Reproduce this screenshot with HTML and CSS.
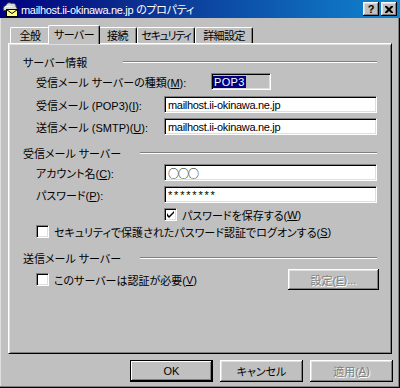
FILE: index.html
```html
<!DOCTYPE html>
<html lang="ja">
<head>
<meta charset="utf-8">
<title>mailhost.ii-okinawa.ne.jp のプロパティ</title>
<link rel="stylesheet" href="styles.css">
</head>
<body>
<div class="window">
  <div class="titlebar">
    <svg class="app-icon" width="16" height="16" viewBox="0 0 16 16">
      <path d="M1.5 9.5 C0.5 7 2 4.5 4 4.5 C4.5 2 7.5 1 9.5 2.5 C11.5 1.5 14.5 3 14 6 C15.5 6.5 15.5 9 14 9.5 Z" fill="#d8d8d8" stroke="#404040"/>
      <path d="M3 6 C5 5 8 5 10 6" fill="none" stroke="#ffffff"/>
      <rect x="4.5" y="8.5" width="11" height="7" fill="#ffff80" stroke="#000"/>
      <path d="M4.5 8.5 L10 12.5 L15.5 8.5" fill="none" stroke="#000"/>
    </svg>
    <span class="title">mailhost.ii-okinawa.ne.jp のプロパティ</span>
    <div class="title-buttons">
      <span class="tbtn help">?</span>
      <span class="tbtn close">
        <svg width="8" height="7" viewBox="0 0 8 7"><path d="M0 0h2l2 2 2-2h2v1l-2.5 2.5 2.5 2.5v1h-2l-2-2-2 2h-2v-1l2.5-2.5-2.5-2.5z" fill="#000"/></svg>
      </span>
    </div>
  </div>

  <div class="body">
    <div class="tabs">
      <span class="tab">全般</span>
      <span class="tab active">サーバー</span>
      <span class="tab">接続</span>
      <span class="tab tight">セキュリティ</span>
      <span class="tab">詳細設定</span>
    </div>

    <div class="panel">
      <div class="group-title"><span class="gt-label">サーバー情報</span><span class="etch"></span></div>

      <div class="row mt4">
        <span>受信メール サーバーの種類(<u>M</u>):</span>
        <span class="readonly"><span class="sel">POP3</span></span>
      </div>
      <div class="row mt6">
        <span>受信メール (POP3)(<u>I</u>):</span>
        <span class="field latin">mailhost.ii-okinawa.ne.jp</span>
      </div>
      <div class="row mt5">
        <span>送信メール (SMTP)(<u>U</u>):</span>
        <span class="field latin">mailhost.ii-okinawa.ne.jp</span>
      </div>

      <div class="group-title mt11"><span class="gt-label wide">受信メール サーバー</span><span class="etch"></span></div>

      <div class="row mt4">
        <span>アカウント名(<u>C</u>):</span>
        <span class="field circles">○○○</span>
      </div>
      <div class="row mt5">
        <span>パスワード(<u>P</u>):</span>
        <span class="field pw">********</span>
      </div>
      <div class="row mt3">
        <span></span>
        <span class="check-line"><span class="checkbox checked"><svg width="7" height="7" viewBox="0 0 7 7"><path d="M0 2v3l2 2 5-5v-2l-5 5z" fill="#000"/></svg></span>パスワードを保存する(<u>W</u>)</span>
      </div>
      <div class="row single">
        <span class="check-line"><span class="checkbox"></span>セキュリティで保護されたパスワード認証でログオンする(<u>S</u>)</span>
      </div>

      <div class="group-title mt11"><span class="gt-label wide">送信メール サーバー</span><span class="etch"></span></div>

      <div class="row-split mt4">
        <span class="check-line"><span class="checkbox"></span>このサーバーは認証が必要(<u>V</u>)</span>
        <span class="button disabled settings">設定(<u>E</u>)...</span>
      </div>
    </div>

    <div class="actions">
      <span class="button default">OK</span>
      <span class="button">キャンセル</span>
      <span class="button disabled">適用(<u>A</u>)</span>
    </div>
  </div>
</div>
</body>
</html>
```

FILE: styles.css
```css
* { box-sizing: border-box; }

html, body {
  margin: 0;
  padding: 0;
  background: #c0c0c0;
}

body {
  font-family: "Liberation Sans", "Noto Sans CJK JP", sans-serif;
  font-size: 11px;
  font-feature-settings: "palt";
  color: #000;
}

.window {
  width: 400px;
  height: 388px;
  background: #c0c0c0;
  box-shadow: inset -1px -1px #000, inset -2px -2px #808080, inset 1px 0 #dfdfdf;
  overflow: hidden;
}

.titlebar {
  height: 18px;
  display: flex;
  align-items: center;
  background: linear-gradient(to right, #000080 0%, #0a2a8c 30%, #1084d0 100%);
  color: #fff;
}

.app-icon {
  margin-left: 2px;
  flex: none;
}

.title {
  margin-left: 3px;
  white-space: nowrap;
  letter-spacing: -0.3px;
}

.title-buttons {
  margin-left: auto;
  margin-right: 3px;
  display: flex;
  gap: 2px;
}

.tbtn {
  width: 16px;
  height: 14px;
  background: #c0c0c0;
  box-shadow: inset -1px -1px #000, inset 1px 1px #fff, inset -2px -2px #808080, inset 2px 2px #dfdfdf;
  display: flex;
  align-items: center;
  justify-content: center;
  color: #000;
  font-weight: bold;
  font-size: 11px;
  line-height: 1;
}

.tbtn.help { padding-top: 1px; }

.body {
  padding: 7px 0 0 8px;
}

.tabs {
  display: grid;
  grid-template-columns: 40px 48px 39px 58px 58px;
  align-items: end;
  height: 18px;
  padding-left: 2px;
  position: relative;
  z-index: 1;
}

.tab {
  height: 16px;
  padding: 0 0 1px;
  display: flex;
  align-items: center;
  justify-content: center;
  background: #c0c0c0;
  border-top: 1px solid #fff;
  border-left: 1px solid #fff;
  border-right: 1px solid #000;
  border-radius: 2px 2px 0 0;
  box-shadow: inset -1px 0 #808080;
  white-space: nowrap;
  letter-spacing: -0.6px;
}

.tab.tight { letter-spacing: -1.3px; }

.tab.active {
  height: 19px;
  margin: 0 -2px -1px;
  padding: 0 0 2px;
  position: relative;
  z-index: 2;
}

.panel {
  width: 384px;
  height: 311px;
  border: 1px solid;
  border-color: #fff #000 #000 #fff;
  box-shadow: inset 1px 1px #dfdfdf, inset -1px -1px #808080;
  padding: 11px 14px 0 14px;
}

.group-title {
  display: flex;
  align-items: center;
  height: 14px;
}

.gt-label {
  width: 100px;
  flex: none;
  white-space: nowrap;
}

.gt-label.wide { width: 117px; }

.etch {
  flex: 1;
  height: 2px;
  border-top: 1px solid #808080;
  border-bottom: 1px solid #fff;
}

.row {
  display: grid;
  grid-template-columns: 128px 1fr;
  align-items: center;
  height: 17px;
  padding-left: 13px;
  white-space: nowrap;
}

.row.single { grid-template-columns: 1fr; }

.row-split {
  display: flex;
  align-items: center;
  justify-content: space-between;
  height: 21px;
  padding-left: 13px;
  margin-right: -2px;
}

.mt3 { margin-top: 3px; }
.mt4 { margin-top: 4px; }
.mt5 { margin-top: 5px; }
.mt6 { margin-top: 6px; }
.mt11 { margin-top: 11px; }

.field, .readonly {
  height: 17px;
  display: flex;
  align-items: center;
  padding: 0 3px;
  border: 1px solid;
  border-color: #808080 #fff #fff #808080;
  box-shadow: inset 1px 1px #000, inset -1px -1px #dfdfdf;
  background: #fff;
  white-space: nowrap;
}

.latin {
  letter-spacing: -0.3px;
}

.circles {
  font-family: "Noto Sans CJK JP", sans-serif;
  font-feature-settings: normal;
  font-size: 11px;
  letter-spacing: -1px;
}

.pw {
  letter-spacing: 1.8px;
}

.readonly {
  width: 60px;
  margin-left: 47px;
  background: #c0c0c0;
  padding: 0 1px;
}

.sel {
  background: #000080;
  color: #fff;
  padding: 0 1px;
  letter-spacing: 0.3px;
  line-height: 12px;
}

.check-line {
  display: flex;
  align-items: center;
  white-space: nowrap;
}

.checkbox {
  width: 13px;
  height: 13px;
  flex: none;
  margin-right: 5px;
  background: #fff;
  border: 1px solid;
  border-color: #808080 #fff #fff #808080;
  box-shadow: inset 1px 1px #000, inset -1px -1px #dfdfdf;
  display: flex;
  align-items: center;
  justify-content: center;
}

.button {
  height: 21px;
  display: flex;
  align-items: center;
  justify-content: center;
  background: #c0c0c0;
  box-shadow: inset -1px -1px #000, inset 1px 1px #fff, inset -2px -2px #808080, inset 2px 2px #dfdfdf;
  white-space: nowrap;
}

.button.settings { width: 91px; }

.button.disabled {
  color: #808080;
  text-shadow: 1px 1px #fff;
}

.actions {
  display: flex;
  justify-content: flex-end;
  gap: 7px;
  margin-top: 6px;
  padding-right: 7px;
}

.actions .button {
  width: 83px;
  height: 22px;
}

.button.default {
  border: 1px solid #000;
  box-shadow: inset -1px -1px #000, inset 1px 1px #fff, inset -2px -2px #808080;
}
```
